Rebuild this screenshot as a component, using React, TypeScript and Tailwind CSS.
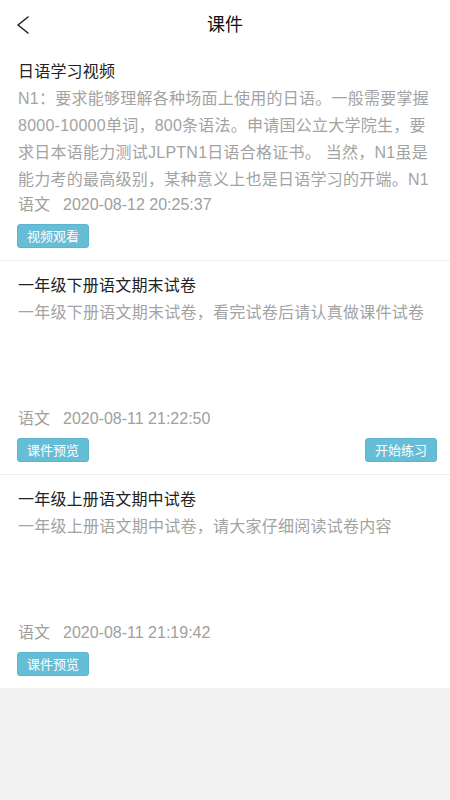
import React from "react";

const FONT = { fontFamily: '"Liberation Sans", "Noto Sans CJK SC", sans-serif' };

function Btn({ children }: { children: React.ReactNode }) {
  return (
    <div className="flex h-[24px] w-[72px] items-center justify-center rounded-[3px] border border-[#5cb5ce] bg-[#66bed6] text-[13px] leading-none text-white">
      {children}
    </div>
  );
}

type Card = {
  title: string;
  lines: string[];
  date: string;
  left: string;
  right?: string;
};

const cards: Card[] = [
  {
    title: "日语学习视频",
    lines: [
      "N1：要求能够理解各种场面上使用的日语。一般需要掌握",
      "8000-10000单词，800条语法。申请国公立大学院生，要",
      "求日本语能力测试JLPTN1日语合格证书。 当然，N1虽是",
      "能力考的最高级别，某种意义上也是日语学习的开端。N1",
    ],
    date: "2020-08-12 20:25:37",
    left: "视频观看",
  },
  {
    title: "一年级下册语文期末试卷",
    lines: ["一年级下册语文期末试卷，看完试卷后请认真做课件试卷"],
    date: "2020-08-11 21:22:50",
    left: "课件预览",
    right: "开始练习",
  },
  {
    title: "一年级上册语文期中试卷",
    lines: ["一年级上册语文期中试卷，请大家仔细阅读试卷内容"],
    date: "2020-08-11 21:19:42",
    left: "课件预览",
  },
];

export default function App() {
  return (
    <div className="flex min-h-[800px] w-[450px] flex-col bg-[#f2f2f2]" style={FONT}>
      <div className="relative flex h-[50px] items-center justify-center bg-white">
        <svg className="absolute left-[14px] top-[13px]" width="20" height="24" viewBox="0 0 20 24">
          <path d="M14 4 L4 12 L14 20" fill="none" stroke="#222" strokeWidth="1.6" strokeLinecap="round" strokeLinejoin="round" />
        </svg>
        <div className="text-[18px] text-[#111]">课件</div>
      </div>
      {cards.map((c, i) => (
        <div
          key={i}
          className={`flex flex-col bg-white pl-[17px] pr-[13px] pb-[12px] ${i === 0 ? "pt-[10px]" : "pt-[13px] border-t border-[#efefef]"}`}
        >
          <div className="pl-[1px] text-[16px] leading-[24px] tracking-[0.2px] text-[#222]">{c.title}</div>
          <div className="h-[109px] overflow-hidden pl-[1px] pt-[1px] text-[16px] leading-[27px] tracking-[0.25px] text-[#a3a3a3]">
            {c.lines.map((l, j) => (
              <div key={j} className="whitespace-nowrap">{l}</div>
            ))}
          </div>
          <div className="flex pl-[1px] text-[16px] leading-[24px] text-[#a0a0a0]">
            <span>语文</span>
            <span className="ml-[13px]">{c.date}</span>
          </div>
          <div className="mt-[7px] flex items-center justify-between">
            <Btn>{c.left}</Btn>
            {c.right ? <Btn>{c.right}</Btn> : null}
          </div>
        </div>
      ))}
      <div className="flex-1 bg-[#f2f2f2]" />
    </div>
  );
}
